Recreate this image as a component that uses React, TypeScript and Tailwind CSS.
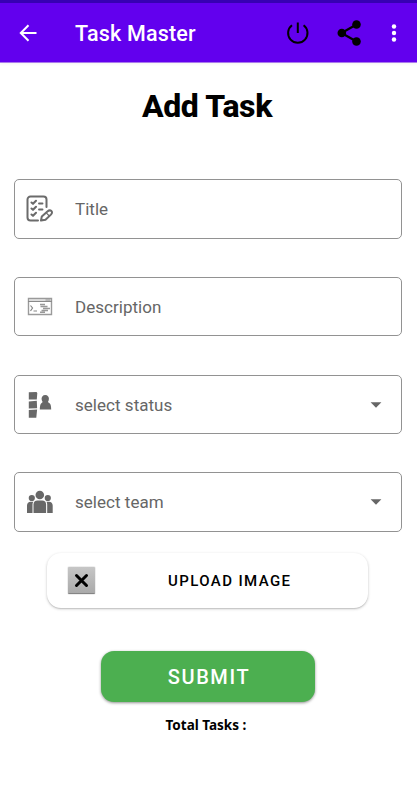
import type { ReactNode } from 'react';

function ChecklistIcon() {
  return (
    <svg width="28" height="28" viewBox="0 0 28 28" fill="none" stroke="#6b6b6b" strokeLinecap="round" strokeLinejoin="round">
      <path d="M20.500 12V4.500a3 3 0 0 0-3-3h-13a3 3 0 0 0-3 3v18a3 3 0 0 0 3 3H12" strokeWidth="2" />
      <path d="M5.500 7.500l1.500 1.300 3-3M5.500 13.500l1.500 1.300 3-3M5.500 19.500l1.500 1.300 3-3" strokeWidth="2.100" />
      <path d="M13 8.500h3.500M13 14.500h3.500" strokeWidth="1.900" />
      <path d="M15 25.500l.8-4 5.600-5c1.500-1.300 3-1.400 4-.5s.8 2.200-.5 3.600l-5.400 5.200z" strokeWidth="2" />
      <path d="M20.500 18.200l2.800 2.800" strokeWidth="1.200" />
    </svg>
  );
}

function TerminalIcon() {
  return (
    <svg width="28" height="28" viewBox="0 0 28 28" fill="none" stroke="#9a9a9a">
      <path d="M2.500 5.500h23v16h-23z" strokeWidth="1.400" />
      <path d="M3 7h22" stroke="#d2d2d2" strokeWidth="1.500" />
      <path d="M2 8.500h24" stroke="#8a8a8a" strokeWidth="1" />
      <path d="M19.500 7h5" stroke="#aaaaaa" strokeWidth="1.500" />
      <path d="M4.500 12.500l2 2.500-2 3M7.500 18h3.500" stroke="#858585" strokeWidth="1.200" />
      <path d="M14 11.500h5M14.500 13.500h7M17 15.500h7M15.500 17.500h6.500M14 19.300h5" stroke="#999999" strokeWidth="1.500" />
    </svg>
  );
}

function StatusIcon() {
  return (
    <svg width="28" height="28" viewBox="0 0 28 28" fill="#686868">
      <path d="M2.800 1.300l7.700-.3.800 1-.5 6.500h-8zM2.800 10.500l8-.800.3 7.500-8.300.200zM2.800 19l8.300-.5-.800 8.300H2.800z" />
      <path d="M15.700 8.800a3.700 3.700 0 1 1 7.100 0c-.1.900-.5 1.800-.9 2.300l1.900 1.500c.9.700 1.300 2.900 1.400 6H13.800c.1-3.300.5-5.300 1.300-6l1.600-1.500c-.5-.5-.9-1.400-1-2.300z" />
    </svg>
  );
}

function TeamIcon() {
  return (
    <svg width="28" height="28" viewBox="0 0 28 28" fill="#686868">
      <circle cx="13.800" cy="7" r="4.300" />
      <circle cx="5.800" cy="10" r="3.100" />
      <circle cx="21.800" cy="10" r="3.100" />
      <path d="M7.500 25v-8.500c0-2.500 1.500-4 4-4h4.600c2.500 0 4 1.500 4 4V25z" />
      <path d="M1 25v-7.500c0-2.300 1.500-3.800 3.800-3.800h2.500c-.6.800-.8 1.700-.8 2.800V25zM21.200 25v-8.500c0-1.100-.2-2-.7-2.800H23c2.200 0 3.700 1.500 3.700 3.800V25z" />
    </svg>
  );
}

function Field({ icon, label, size, select }: { icon: ReactNode; label: string; size: string; select?: boolean }) {
  return (
    <div className={`flex items-center rounded-[5px] border border-[#929292] pr-[19px] pl-[11px] ${size}`}>
      {icon}
      <span className="ml-[21px] flex-1 text-[17px] leading-6 tracking-[0.030px] text-[#666]">{label}</span>
      {select && (
        <svg width="12" height="6" viewBox="0 0 12 6" fill="#666">
          <path d="M.6.300h10.800L6 5.700z" />
        </svg>
      )}
    </div>
  );
}

export default function App() {
  return (
    <div className="flex h-[787px] w-[417px] flex-col overflow-hidden bg-white font-[Roboto,sans-serif]">
      <div className="h-[3px] shrink-0 bg-[#3700b3]" />
      <header className="flex h-[59px] shrink-0 items-center bg-[#6200ee] pl-[19px] shadow-[0_1px_0_#a979ec,0_2px_3px_#0000000d]">
        <svg width="18" height="18" viewBox="0 0 18 18" fill="none" stroke="white" strokeWidth="2">
          <path d="M17.500 9H2.500M9.500 1.300L1.800 9l7.700 7.700" />
        </svg>
        <h1 className="ml-[38px] w-[211px] pt-[3px] text-[21.500px] font-medium tracking-[0.200px] text-white">Task Master</h1>
        <svg width="24" height="24" viewBox="0 0 24 24" fill="none" stroke="black" strokeWidth="2">
          <path d="M11.800 1.500v10.500M6 4.300a9.700 9.700 0 1 0 11.600 0" />
        </svg>
        <svg className="ml-[26px]" width="26" height="28" viewBox="0 0 26 28">
          <path d="M20.500 5.500L5.500 14l15 8.500" fill="none" stroke="black" strokeWidth="2.200" />
          <circle cx="20.500" cy="5.500" r="4.300" />
          <circle cx="5.800" cy="14" r="4.300" />
          <circle cx="20.500" cy="22.500" r="4.300" />
        </svg>
        <svg className="ml-[29px]" width="6" height="18" viewBox="0 0 6 18" fill="white">
          <circle cx="3" cy="2.500" r="2.200" />
          <circle cx="3" cy="9" r="2.200" />
          <circle cx="3" cy="15.500" r="2.200" />
        </svg>
      </header>
      <h2 className="mt-[24px] pr-[3px] text-center text-[32px] leading-10 font-extrabold tracking-[-0.350px] text-black">Add Task</h2>
      <main className="mt-[53px] flex flex-col pr-[15px] pl-[14px]">
        <Field icon={<ChecklistIcon />} label="Title" size="h-[60px]" />
        <Field icon={<TerminalIcon />} label="Description" size="mt-[38px] h-[59px]" />
        <Field icon={<StatusIcon />} label="select status" size="mt-[39px] h-[59px]" select />
        <Field icon={<TeamIcon />} label="select team" size="mt-[38px] h-[60px]" select />
      </main>
      <button className="mt-[21px] ml-[47px] flex h-[55px] w-[321px] shrink-0 items-center rounded-[14px] bg-white pl-[21px] shadow-[0_1px_3px_#00000038,0_1px_1px_#00000018]">
        <span className="flex h-[27px] w-[27px] items-center justify-center rounded-[1px] border-b border-[#858585] bg-linear-to-b from-[#c6c6c6] to-[#aaaaaa] shadow-[0_0_1px_#555]">
          <svg width="15" height="15" viewBox="0 0 15 15" stroke="black" strokeWidth="3" strokeLinecap="round">
            <path d="M2.500 2.500l10 10M12.500 2.500l-10 10" />
          </svg>
        </span>
        <span className="ml-[73px] pt-[2px] text-[15px] font-medium tracking-[1.400px] text-black">UPLOAD IMAGE</span>
      </button>
      <button className="mt-[43px] ml-[101px] h-[51px] w-[214px] shrink-0 rounded-[13px] bg-[#4caf50] pt-[1px] pl-[2px] text-[20px] font-medium tracking-[1.600px] text-white shadow-[0_1px_3px_#00000070]">
        SUBMIT
      </button>
      <p className="mt-[10px] flex justify-center pr-[5px] font-['Noto_Sans',sans-serif] text-[15px] leading-6 font-bold text-black">
        <span className="scale-x-[0.900]">Total Tasks :</span>
      </p>
    </div>
  );
}
